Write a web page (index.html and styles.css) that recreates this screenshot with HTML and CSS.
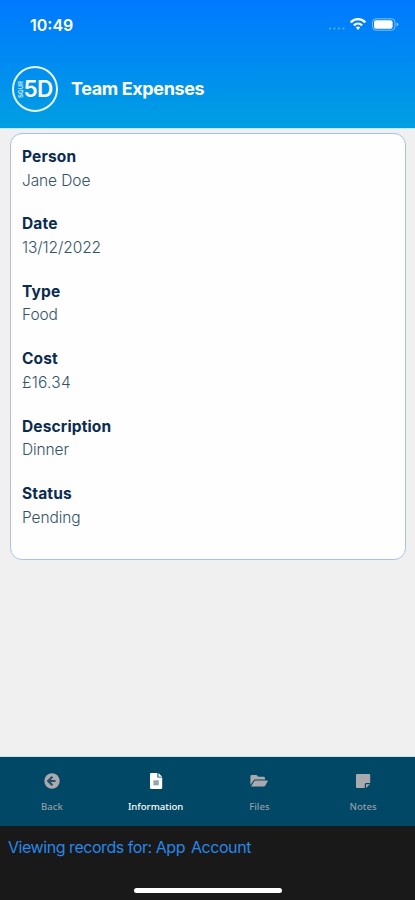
FILE: index.html
```html
<!DOCTYPE html>
<html lang="en">
<head>
<meta charset="utf-8">
<title>Team Expenses</title>
<link rel="stylesheet" href="styles.css">
</head>
<body>
<div class="app">
  <header class="header">
    <div class="statusbar">
      <span class="clock">10:49</span>
      <svg class="indicators" width="74" height="18" viewBox="0 0 74 18">
        <g fill="#6bb8ff" opacity=".8"><circle cx="4" cy="13.500" r="1.100"/><circle cx="8.500" cy="13.500" r="1.100"/><circle cx="13" cy="13.500" r="1.100"/><circle cx="17.500" cy="13.500" r="1.100"/></g>
        <g fill="none" stroke="#fff" stroke-width="2.300"><path d="M24.700 7.400a9.800 9.800 0 0 1 14.600 0"/><path d="M27.900 10.300a6 6 0 0 1 8.200 0"/></g>
        <path fill="#fff" d="M29.800 12.400a3.400 3.400 0 0 1 4.400 0L32 15z"/>
        <rect x="46.500" y="3.800" width="22.500" height="11.400" rx="3.400" fill="none" stroke="#82c0ff" stroke-width="1"/>
        <rect x="48" y="5.200" width="18.600" height="8.600" rx="2" fill="#fff"/>
        <path fill="#82c0ff" d="M70.500 7.600q2 .6 2 2t-2 2z"/>
      </svg>
    </div>
    <div class="titlebar">
      <div class="logo"><span class="logo-side">SQUR</span><span class="logo-main">5D</span></div>
      <h1 class="title">Team Expenses</h1>
    </div>
  </header>
  <main class="content">
    <dl class="card">
      <div class="field"><dt>Person</dt><dd>Jane Doe</dd></div>
      <div class="field"><dt>Date</dt><dd>13/12/2022</dd></div>
      <div class="field"><dt>Type</dt><dd>Food</dd></div>
      <div class="field"><dt>Cost</dt><dd class="cost">£16.34</dd></div>
      <div class="field"><dt>Description</dt><dd>Dinner</dd></div>
      <div class="field"><dt>Status</dt><dd>Pending</dd></div>
    </dl>
  </main>
  <nav class="tabs">
    <a class="tab">
      <svg width="18" height="18" viewBox="0 0 18 18"><circle cx="9" cy="9" r="7.700" fill="#aaa9ad"/><path d="M9.400 4.800L5.200 9l4.200 4.200M5.500 9h7" fill="none" stroke="#244f66" stroke-width="2.200"/></svg>
      <span>Back</span>
    </a>
    <a class="tab active">
      <svg width="18" height="18" viewBox="0 0 18 18"><path fill="#fff" d="M4.200 1h6.200v4.600h4.800v10.200q0 1.200-1.200 1.200H4.200Q3 17 3 15.800V2.200Q3 1 4.200 1zM11.400 1l3.800 3.700h-3.800z"/><rect x="6.400" y="8.300" width="5.400" height="5" fill="#8faaa7"/></svg>
      <span>Information</span>
    </a>
    <a class="tab">
      <svg width="18" height="18" viewBox="0 0 18 18"><path fill="#aaa9ad" d="M.4 13V4.400Q.4 3 1.800 3h4.700l1.800 1.800h5.300q1.400 0 1.400 1.400v1.200H5.300q-1.100 0-1.700 1zM1 14.600l3.200-5.400q.4-.8 1.300-.8h11.700q1 0 .5.900l-2.500 4.500q-.5.800-1.400.8z"/></svg>
      <span>Files</span>
    </a>
    <a class="tab">
      <svg width="18" height="18" viewBox="0 0 18 18"><path fill="#aaa9ad" d="M3 2h12.200q1 0 1 1v8h-4q-1.400 0-1.400 1.400V16H3q-1 0-1-1V3q0-1 1-1zM12 12.200h4L12 16z"/></svg>
      <span>Notes</span>
    </a>
  </nav>
  <footer class="footer">
    <p class="account"><span>Viewing records for:</span><span class="app-name">App</span><span>Account</span></p>
    <div class="home"></div>
  </footer>
</div>
</body>
</html>
```
FILE: styles.css
```css
* { box-sizing: border-box; }
body, h1, dl, dd, p { margin: 0; }
body { font-family: Inter, "Liberation Sans", sans-serif; }
.app { width: 415px; height: 900px; display: flex; flex-direction: column; background: #f0f0f0; overflow: hidden; }
.header { height: 129px; flex: none; background: linear-gradient(#0079ff, #009fe2); border-bottom: 1px solid #bde9fb; color: #fff; }
.statusbar { height: 50px; padding: 0 15px 0 30px; display: flex; align-items: center; justify-content: space-between; }
.clock { font-size: 16px; font-weight: 600; }
.indicators { margin-top: -2px; }
.titlebar { display: flex; align-items: center; height: 78px; padding-left: 12px; gap: 13px; }
.logo { width: 46px; height: 46px; border: 2px solid #e4f5ff; border-radius: 50%; display: flex; align-items: center; justify-content: center; }
.logo-side { writing-mode: vertical-rl; transform: rotate(180deg); font-size: 6px; line-height: 6px; font-weight: 700; color: #c4e6ff; }
.logo-main { font-size: 22.5px; line-height: 24px; font-weight: 600; letter-spacing: -.7px; }
.title { font-size: 18px; line-height: 24px; font-weight: 700; letter-spacing: -.38px; }
.content { flex: 1; padding: 4px 9px 0 10px; }
.card { height: 427px; padding: 11px; background: #fefefe; border: 1px solid #a9c1e5; border-radius: 12px; }
.field { height: 67.4px; font-size: 15.5px; line-height: 23.7px; }
.field dt { font-weight: 650; letter-spacing: .15px; color: #0b2b50; }
.field dd { color: #335468; font-weight: 350; letter-spacing: -.1px; }
.field .cost { letter-spacing: .25px; }
.tabs { height: 70px; flex: none; display: grid; grid-template-columns: repeat(4, 1fr); background: #004865; border-top: 1px solid #c4e2ec; }
.tab { display: flex; flex-direction: column; align-items: center; padding-top: 14.5px; gap: 10px; color: #949ca5; font: 500 9.6px/14px "Noto Sans", sans-serif; }
.active { color: #fff; font-weight: 550; }
.footer { height: 74px; flex: none; background: #191919; padding: 10px 8px 0; display: flex; flex-direction: column; }
.account { display: flex; gap: 6px; color: #2987e8; font-size: 16px; line-height: 22px; letter-spacing: -.45px; white-space: nowrap; }
.app-name { margin-left: -2px; }
.home { width: 148px; height: 5px; border-radius: 3px; background: #fff; margin: 30px auto 0 126px; }
```
